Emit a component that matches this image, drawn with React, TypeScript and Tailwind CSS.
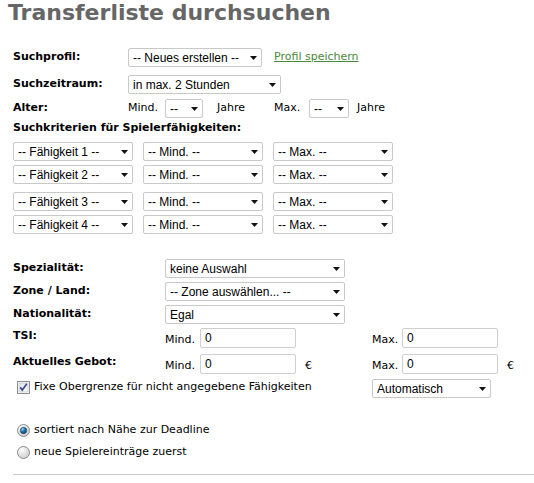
import React from "react";

const sel = "font-['Liberation_Sans',Arial,sans-serif] text-[12px] text-black";

const Select = ({value, className}: { value: string, className: string }) => (
    <div className={"relative h-[19px] shrink-0 " + className}>
        <select
            defaultValue={value}
            className={"h-full w-full appearance-none rounded-[2px] border border-[#c9c9c9] bg-white pl-[4px] pr-4 outline-none " + sel}
        >
            <option>{value}</option>
        </select>
        <svg className="pointer-events-none absolute right-[5px] top-[8px]" width="7" height="4" viewBox="0 0 7 4">
            <path d="M0 0h7L3.5 4z" fill="#111"/>
        </svg>
    </div>
)

const Input = ({value}: { value: string }) => (
    <input
        defaultValue={value}
        className={"h-[20px] w-[96px] shrink-0 rounded-[2px] border border-[#cfcfcf] bg-white pl-[4px] outline-none " + sel}
    />
)

const Checkbox = () => (
    <svg width="13" height="13" viewBox="0 0 13 13" className="shrink-0">
        <defs>
            <linearGradient id="cb" x1="0" y1="0" x2="1" y2="1">
                <stop offset="0" stopColor="#dfe3ea"/>
                <stop offset="1" stopColor="#f7f8fa"/>
            </linearGradient>
        </defs>
        <rect x="0.5" y="0.5" width="12" height="12" fill="#fff" stroke="#8f8f8f"/>
        <rect x="2" y="2" width="9" height="9" fill="url(#cb)" stroke="#b4bccb" strokeWidth="0.6"/>
        <path d="M3.2 6.4 5.3 9 9.8 2.8" fill="none" stroke="#3b4f8c" strokeWidth="1.7"/>
    </svg>
)

const Radio = ({checked}: { checked?: boolean }) => (
    <svg width="13" height="13" viewBox="0 0 13 13" className="shrink-0">
        <defs>
            <radialGradient id={checked ? "r1" : "r0"} cx="0.35" cy="0.3" r="0.8">
                <stop offset="0" stopColor="#ffffff"/>
                <stop offset="1" stopColor="#c9c9c9"/>
            </radialGradient>
            <radialGradient id="dot" cx="0.35" cy="0.3" r="0.8">
                <stop offset="0" stopColor="#8fd3f5"/>
                <stop offset="0.5" stopColor="#1a6ea3"/>
                <stop offset="1" stopColor="#0d3f66"/>
            </radialGradient>
        </defs>
        <circle cx="6.5" cy="6.5" r="6" fill={checked ? "url(#r1)" : "url(#r0)"} stroke="#8c8c8c"/>
        {checked && <circle cx="6.5" cy="6.5" r="3.2" fill="url(#dot)" stroke="#1b3f5e" strokeWidth="0.6"/>}
    </svg>
)

const Label = ({children, className}: { children: React.ReactNode, className: string }) => (
    <div className={"shrink-0 font-bold text-black " + className}>{children}</div>
)

export default function App() {
    return (
        <div className="min-h-[483px] w-[534px] bg-white font-['DejaVu_Sans',Verdana,sans-serif] text-[11px] text-black">
            <h1 className="px-[8px] text-[22px] font-bold leading-[26px] text-[#666]">
                Transferliste durchsuchen
            </h1>

            <div className="mt-[22px] pl-[13px]">
                <div className="flex items-center">
                    <Label className="w-[115px]">Suchprofil:</Label>
                    <Select value="-- Neues erstellen --" className="w-[134px]"/>
                    <a href="#" className="ml-[12px] text-[#4a8a3c] underline">Profil speichern</a>
                </div>
                <div className="mt-[8px] flex items-center">
                    <Label className="w-[115px]">Suchzeitraum:</Label>
                    <Select value="in max. 2 Stunden" className="w-[153px]"/>
                </div>
                <div className="mt-[5px] flex items-center">
                    <Label className="w-[115px]">Alter:</Label>
                    <span className="w-[37px] shrink-0">Mind.</span>
                    <Select value="--" className="w-[38px]"/>
                    <span className="ml-[14px] w-[57px] shrink-0">Jahre</span>
                    <span className="w-[35px] shrink-0">Max.</span>
                    <Select value="--" className="w-[40px]"/>
                    <span className="ml-[8px]">Jahre</span>
                </div>

                <div className="mt-[3px] font-bold leading-[14px]">Suchkriterien für Spielerfähigkeiten:</div>
                <div className="mt-[7px] flex flex-col gap-[4px]">
                    {[1, 2, 3, 4].map(n => (
                        <div key={n} className={"flex gap-[10px] " + (n === 3 ? "mt-[4px]" : "")}>
                            <Select value={`-- Fähigkeit ${n} --`} className="w-[120px]"/>
                            <Select value="-- Mind. --" className="w-[120px]"/>
                            <Select value="-- Max. --" className="w-[120px]"/>
                        </div>
                    ))}
                </div>

                <div className="mt-[25px] flex flex-col gap-[4px]">
                    <div className="flex items-center">
                        <Label className="w-[152px]">Spezialität:</Label>
                        <Select value="keine Auswahl" className="w-[180px]"/>
                    </div>
                    <div className="flex items-center">
                        <Label className="w-[152px]">Zone / Land:</Label>
                        <Select value="-- Zone auswählen... --" className="w-[180px]"/>
                    </div>
                    <div className="flex items-center">
                        <Label className="w-[152px]">Nationalität:</Label>
                        <Select value="Egal" className="w-[180px]"/>
                    </div>
                    <div className="flex items-center">
                        <Label className="w-[152px] self-start">TSI:</Label>
                        <span className="mt-[4px] w-[35px] shrink-0">Mind.</span>
                        <Input value="0"/>
                        <span className="w-[76px] shrink-0"/>
                        <span className="mt-[4px] w-[30px] shrink-0">Max.</span>
                        <Input value="0"/>
                    </div>
                    <div className="mt-[1px] flex items-center">
                        <Label className="w-[152px] self-start">Aktuelles Gebot:</Label>
                        <span className="mt-[4px] w-[35px] shrink-0">Mind.</span>
                        <Input value="0"/>
                        <span className="mt-[4px] w-[76px] shrink-0 pl-[9px]">€</span>
                        <span className="mt-[4px] w-[30px] shrink-0">Max.</span>
                        <Input value="0"/>
                        <span className="mt-[4px] pl-[9px]">€</span>
                    </div>
                    <div className="mt-[1px] flex items-start">
                        <label className="flex w-[359px] shrink-0 items-center gap-[4px] pl-[4px]">
                            <Checkbox/>
                            <span>Fixe Obergrenze für nicht angegebene Fähigkeiten</span>
                        </label>
                        <Select value="Automatisch" className="w-[119px]"/>
                    </div>
                </div>

                <div className="mt-[24px] flex flex-col gap-[6px] pl-[4px]">
                    <label className="flex h-[16px] items-center gap-[4px]">
                        <Radio checked/>
                        <span>sortiert nach Nähe zur Deadline</span>
                    </label>
                    <label className="flex h-[16px] items-center gap-[4px]">
                        <Radio/>
                        <span>neue Spielereinträge zuerst</span>
                    </label>
                </div>

                <hr className="mt-[14px] border-0 border-t border-[#c8c8c8]"/>
            </div>
        </div>
    )
}
